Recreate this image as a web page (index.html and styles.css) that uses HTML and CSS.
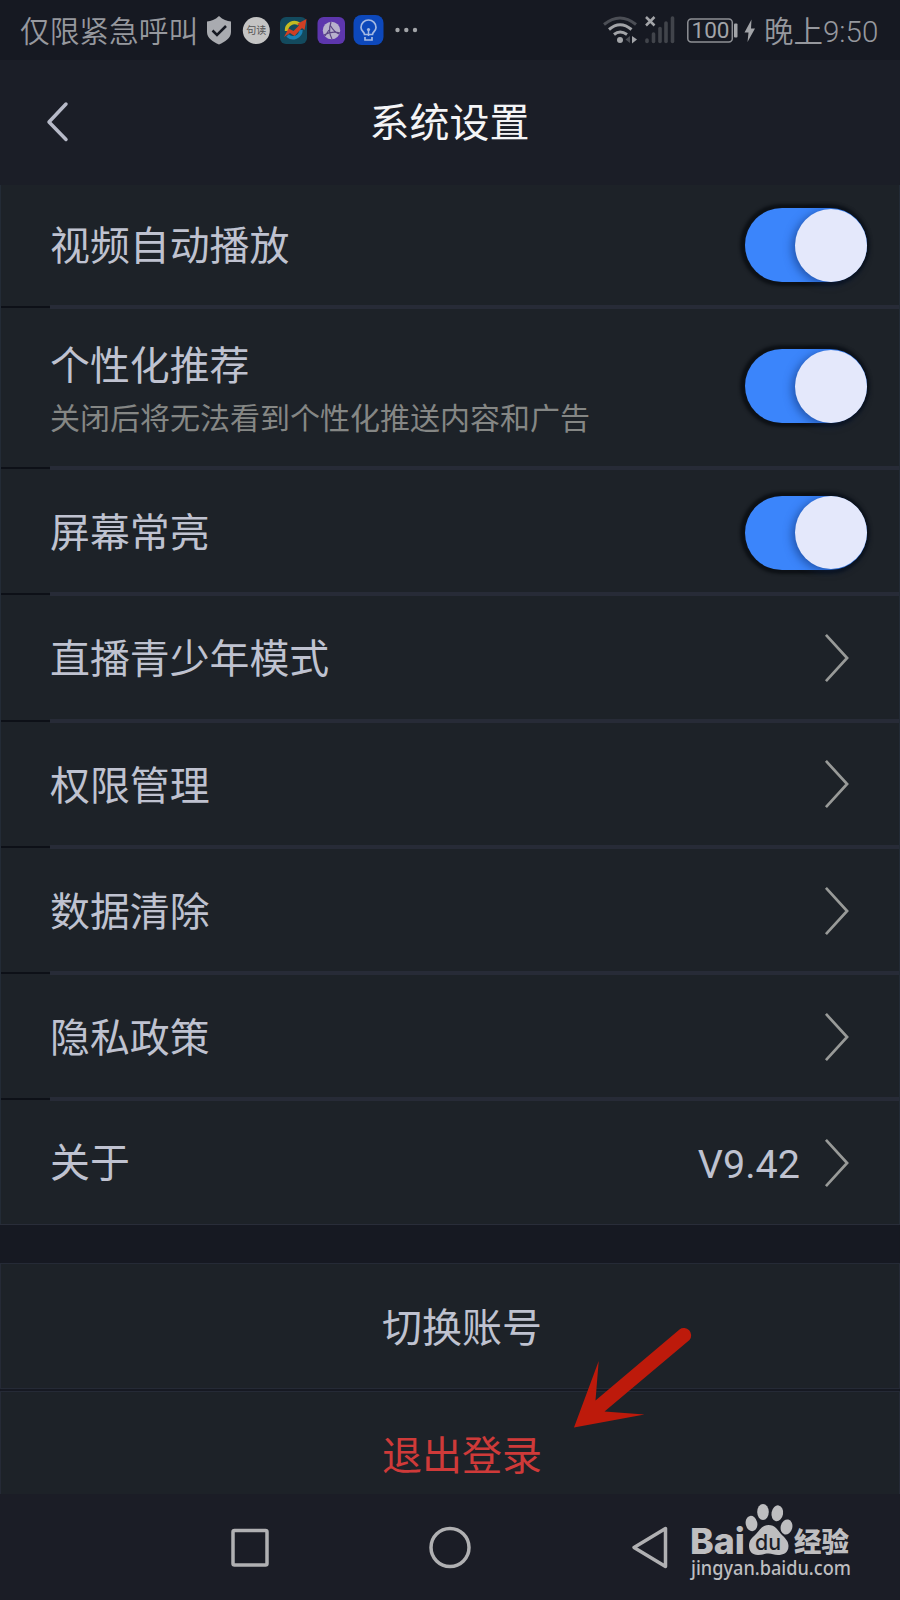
FILE: index.html
```html
<!DOCTYPE html>
<html lang="zh-CN">
<head>
  <meta charset="UTF-8" />
  <title>系统设置</title>
  <link rel="stylesheet" href="styles.css">
</head>
<body>
<div class="phone">

  <!-- status bar -->
  <div class="status-bar">
    <span class="carrier">仅限紧急呼叫</span>
    <svg class="status-icons" width="216" height="60" viewBox="204 0 216 60">
      <path d="M219 16C223 20 227 21 231 21.500V32C231 38 225 42 219 44.500C213 42 207 38 207 32V21.500C211 21 215 20 219 16Z" fill="#a9abb0"/>
      <path d="M212.500 30.500L217 35L226 26" fill="none" stroke="#161922" stroke-width="2.500"/>
      <circle cx="256.300" cy="30.500" r="13.500" fill="#c4c4c4"/>
      <text class="badge" x="256.300" y="34" text-anchor="middle" font-size="10" fill="#555">句读</text>
      <rect x="280" y="17" width="27" height="27" rx="6" fill="#134a5e"/>
      <path d="M286.500 31A8 8 0 0 1 299 24" fill="none" stroke="#c3ba22" stroke-width="3.500"/>
      <path d="M301 30A8 8 0 0 1 287.500 35.500" fill="none" stroke="#1b80b5" stroke-width="3.500"/>
      <path d="M284 37L288.500 28.500L293.500 31L299 25.500L297 24L306.500 19L304.500 30L302 28L294.500 36L290 33Z" fill="#cf3f24"/>
      <rect x="317.500" y="17" width="27.500" height="27" rx="6" fill="#5d36ad"/>
      <circle cx="331.500" cy="30.500" r="8.700" fill="#b8b1cc"/>
      <path d="M331 22C329 28 329 34 332 39M324 35C329 32 333 31 340 33M330 25C333 30 336 33 339 34M329 30L325 36" fill="none" stroke="#5a4484" stroke-width="1.200"/>
      <rect x="353.500" y="15" width="30" height="30" rx="8" fill="#0d48bb"/>
      <path d="M364.500 34.500C364.500 32 361 31 361 27.500A7.500 7.500 0 0 1 376 27.500C376 31 372.500 32 372.500 34.500ZM365 37V40H372V37" fill="none" stroke="#a5b9e2" stroke-width="1.700"/>
      <path d="M368.500 30V36" stroke="#a5b9e2" stroke-width="1.500"/>
      <circle cx="368.500" cy="29.500" r="1.600" fill="#a5b9e2"/>
      <g fill="#a2a4a8">
        <circle cx="397.500" cy="30" r="2.200"/>
        <circle cx="406.300" cy="30" r="2.200"/>
        <circle cx="415" cy="30" r="2.200"/>
      </g>
    </svg>
    <svg class="status-signal" width="160" height="60" viewBox="600 0 160 60">
      <g fill="none" stroke-width="3">
        <path d="M604 24.500Q620 11.500 636 24.500" stroke="#4b4e55"/>
        <path d="M609 29.500Q620 20 631.500 29.500" stroke="#a2a4a8"/>
        <path d="M614 34.500Q620 29.500 627 34.500" stroke="#a2a4a8"/>
      </g>
      <circle cx="620" cy="40" r="3" fill="#a2a4a8"/>
      <path d="M630 36V43L625.500 39.500Z" fill="#4b4e55"/>
      <path d="M632 36V43.500L637 39.500Z" fill="#a2a4a8"/>
      <path d="M646 17L654.500 25.500M654.500 17L646 25.500" stroke="#a2a4a8" stroke-width="2.500"/>
      <g stroke="#41444b" stroke-width="3.600" stroke-linecap="round">
        <path d="M647 40V41.500"/>
        <path d="M653.500 34V41.500"/>
        <path d="M660 28.500V41.500"/>
        <path d="M666 23V41.500"/>
        <path d="M672.500 18V41.500"/>
      </g>
      <rect x="687.800" y="19" width="44.500" height="23" rx="3.500" fill="none" stroke="#8e9095" stroke-width="1.500"/>
      <rect x="734" y="23.500" width="3.500" height="14" rx="1" fill="#a2a4a8"/>
      <text class="battery" x="710.500" y="38.300" text-anchor="middle" font-size="22.500" fill="#a2a4a8">100</text>
      <path d="M751.500 19.500L744.500 32.500H748.500L747.500 42L755 28.500H751Z" fill="#a2a4a8"/>
    </svg>
    <span class="clock">晚上9:50</span>
  </div>

  <!-- title bar -->
  <div class="header">
    <svg class="back" width="24" height="44" viewBox="0 0 24 44">
      <path d="M21 4L4 22L21 39.500" fill="none" stroke="#b7bac8" stroke-width="3.500" stroke-linecap="round" stroke-linejoin="round"/>
    </svg>
    <h1>系统设置</h1>
  </div>

  <div class="list">
    <div class="row row-first">
      <span class="label">视频自动播放</span>
      <div class="switch"><div class="knob"></div></div>
    </div>
    <div class="row row-tall">
      <div class="texts">
        <span class="label">个性化推荐</span>
        <span class="desc">关闭后将无法看到个性化推送内容和广告</span>
      </div>
      <div class="switch"><div class="knob"></div></div>
    </div>
    <div class="row">
      <span class="label">屏幕常亮</span>
      <div class="switch"><div class="knob"></div></div>
    </div>
    <div class="row">
      <span class="label">直播青少年模式</span>
      <svg class="arrow" viewBox="0 0 26 52"><path d="M1.500 2L23.500 26L1.500 50"/></svg>
    </div>
    <div class="row">
      <span class="label">权限管理</span>
      <svg class="arrow" viewBox="0 0 26 52"><path d="M1.500 2L23.500 26L1.500 50"/></svg>
    </div>
    <div class="row">
      <span class="label">数据清除</span>
      <svg class="arrow" viewBox="0 0 26 52"><path d="M1.500 2L23.500 26L1.500 50"/></svg>
    </div>
    <div class="row">
      <span class="label">隐私政策</span>
      <svg class="arrow" viewBox="0 0 26 52"><path d="M1.500 2L23.500 26L1.500 50"/></svg>
    </div>
    <div class="row row-last">
      <span class="label">关于</span>
      <span class="version">V9.42</span>
      <svg class="arrow" viewBox="0 0 26 52"><path d="M1.500 2L23.500 26L1.500 50"/></svg>
    </div>
  </div>

  <div class="account">
    <div class="action">切换账号</div>
    <div class="action logout">退出登录</div>
  </div>

  <!-- android nav keys -->
  <div class="nav-bar">
    <svg width="450" height="106" viewBox="225 0 450 106" fill="none" stroke="#b0b0b2" stroke-width="3.500" stroke-linejoin="round">
      <rect x="233" y="36.500" width="34" height="34.500" rx="1.500"/>
      <circle cx="450" cy="53.500" r="19"/>
      <path d="M665.500 34.500V72.500L634 53.500Z"/>
    </svg>
  </div>

  <!-- red pointer over the logout button -->
  <svg class="pointer" width="130" height="110" viewBox="568 1322 130 110">
    <path d="M574 1427.500L598.700 1361L595.500 1400.500L679.500 1329.500A7.300 7.300 0 0 1 689.500 1340L604.500 1411.500L644.500 1414.500Z" fill="#bd1a0b"/>
  </svg>

  <svg class="watermark" width="180" height="90" viewBox="684 1500 180 90" fill="#bebec0">
    <text class="logo" x="690" y="1554" font-size="36" textLength="55" lengthAdjust="spacingAndGlyphs">Bai</text>
    <ellipse cx="751.500" cy="1523.500" rx="5.800" ry="7.700" transform="rotate(-12 751.500 1523.500)"/>
    <ellipse cx="763" cy="1512" rx="5.800" ry="8"/>
    <ellipse cx="777.300" cy="1513.300" rx="5.800" ry="8" transform="rotate(10 777.300 1513.300)"/>
    <ellipse cx="786.500" cy="1527" rx="5.800" ry="7.700" transform="rotate(14 786.500 1527)"/>
    <path d="M768.500 1525C775 1525 778 1530 781 1534C785 1538 788.500 1541 788.500 1546C788.500 1553 783 1555 778 1555C774 1555 772 1553.500 768.500 1553.500C765 1553.500 762 1555 758 1555C752 1555 749 1551 749 1546C749 1540 752 1538 756 1534C760 1530 762 1525 768.500 1525Z"/>
    <text class="du" x="755" y="1549.500" font-size="22" textLength="26" lengthAdjust="spacingAndGlyphs">du</text>
    <text class="jy" x="794" y="1551.500" font-size="27" textLength="55" lengthAdjust="spacingAndGlyphs">经验</text>
    <text class="url" x="691" y="1575" font-size="20" textLength="160" lengthAdjust="spacingAndGlyphs">jingyan.baidu.com</text>
  </svg>

</div>
</body>
</html>
```
FILE: styles.css
```css
* {
  box-sizing: border-box;
}

body {
  margin: 0;
  background: #1b1d26;
  font-family: Roboto, "Noto Sans CJK SC", sans-serif;
}

.phone {
  position: relative;
  width: 900px;
  height: 1600px;
  overflow: hidden;
}

.status-bar {
  display: flex;
  align-items: center;
  height: 60px;
  padding: 0 20px;
  background: #161922;
  color: #96989e;
  font-size: 30px;
  line-height: 60px;
}

.carrier {
  width: 184px;
  padding-top: 3px;
  font-size: 29.7px;
  font-weight: 350;
  white-space: nowrap;
}

.status-signal {
  margin-left: auto;
}

.clock {
  width: 120px;
  padding: 3px 0 0 4px;
  font-size: 29.5px;
  font-weight: 350;
  white-space: nowrap;
}

.battery {
  font-family: Roboto, sans-serif;
}

.header {
  display: flex;
  align-items: center;
  height: 125px;
  padding: 0 45px;
  background: #1b1e27;
}

.back {
  margin-bottom: 2px;
}

.header h1 {
  flex: 1;
  margin: 0 25px 6px 0;
  color: #f4f4f6;
  font-size: 40px;
  font-weight: 400;
  text-align: center;
}

.list {
  border-bottom: 1px solid #292d39;
}

.row {
  display: flex;
  align-items: center;
  height: 126.3px;
  padding: 0 32px 0 49px;
  background: linear-gradient(#0d1017, #0d1017) 0 calc(100% - 1px) / 49px 2px no-repeat,
    linear-gradient(#272b37, #272b37) 49px 100% / 850px 4px no-repeat,
    #1d2228;
  border-left: 1px solid #232b36;
  border-right: 1px solid #232b36;
}

.row-first {
  height: 124px;
}

.row-tall {
  height: 161px;
}

.row-last {
  height: 123px;
  background: #1d2228;
}

.label {
  flex: 1;
  padding-top: 2px;
  color: #bfc2d0;
  font-size: 39.9px;
  line-height: 54px;
}

.row-first .label {
  padding-top: 0;
}

.texts {
  display: flex;
  flex: 1;
  flex-direction: column;
  padding-top: 2px;
}

.desc {
  color: #858785;
  font-size: 30px;
  line-height: 49px;
}

.switch {
  display: flex;
  justify-content: flex-end;
  align-items: center;
  width: 122px;
  height: 74px;
  margin-top: -4px;
  border-radius: 37px;
  background: #3b85fb;
  box-shadow: -1px 0 3px 4px #0d1116;
}

.row-tall .switch {
  margin-top: -7px;
}

.row-tall + .row .switch {
  margin-top: -1px;
}

.knob {
  width: 72px;
  height: 73px;
  border-radius: 50%;
  background: #e4e8fb;
  box-shadow: -3px 2px 8px rgba(10, 40, 100, 0.5);
}

.version {
  margin: 3px 24px 0 0;
  color: #bfc2d0;
  font-size: 39.5px;
}

.arrow {
  width: 26px;
  height: 50px;
  margin: -3px 17px 0 0;
  fill: none;
  stroke: #989a98;
  stroke-width: 2.8;
}

.row-last .arrow {
  margin-top: 0;
}

.account {
  padding-top: 38px;
  background: #161922;
}

.action {
  height: 126px;
  padding-left: 24px;
  background: #1d2228;
  border: 1px solid #252a36;
  color: #bfc2d0;
  font-size: 40px;
  line-height: 129px;
  text-align: center;
}

.logout {
  height: 103px;
  margin-top: 2px;
  border-bottom: none;
  color: #cf3a39;
}

.nav-bar {
  display: flex;
  justify-content: center;
  height: 106px;
  background: #1b1d26;
}

.pointer {
  position: absolute;
  left: 568px;
  top: 1322px;
}

.watermark {
  position: absolute;
  left: 684px;
  top: 1500px;
  overflow: visible;
}

.logo {
  font-family: Inter, sans-serif;
  font-weight: 800;
}

.du {
  fill: #1b1d26;
  font-family: Inter, sans-serif;
  font-weight: 500;
}

.jy {
  font-family: "Noto Sans CJK SC", sans-serif;
  font-weight: 900;
}

.url {
  font-family: "Noto Sans", sans-serif;
  font-weight: 500;
}
```
